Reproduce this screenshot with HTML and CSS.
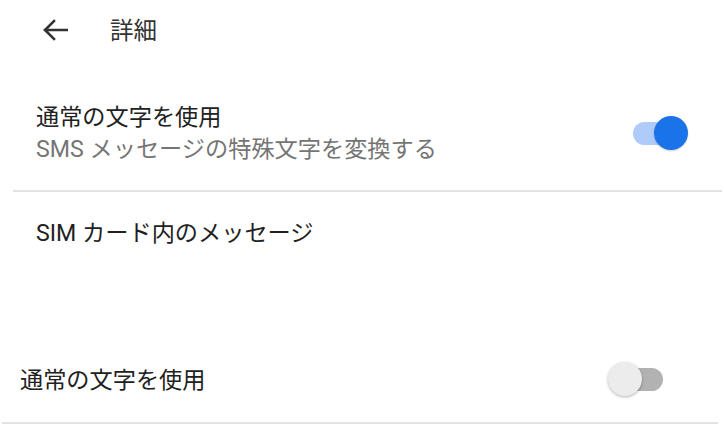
FILE: index.html
```html
<!DOCTYPE html>
<html lang="ja">

<head>
    <meta charset="UTF-8">
    <meta name="viewport" content="width=device-width, initial-scale=1.0">
    <title>詳細</title>
    <link rel="stylesheet" href="styles.css">
</head>

<body>
    <header class="app-bar">
        <svg class="back" width="26" height="22" viewBox="0 0 26 22">
            <path d="M25 11H3M12 2L3 11l9 9" fill="none" stroke="#333" stroke-width="2.6" stroke-linecap="square"/>
        </svg>
        <h1>詳細</h1>
    </header>

    <div class="setting first">
        <div class="text">
            <div class="title">通常の文字を使用</div>
            <div class="summary">SMS メッセージの特殊文字を変換する</div>
        </div>
        <div class="toggle on"><span class="track"></span><span class="thumb"></span></div>
    </div>

    <div class="setting plain">
        <div class="title">SIM カード内のメッセージ</div>
    </div>

    <div class="setting last">
        <div class="title">通常の文字を使用</div>
        <div class="toggle off"><span class="track"></span><span class="thumb"></span></div>
    </div>
</body>

</html>
```

FILE: styles.css
```css
body {
    margin: 0;
    background-color: white;
    font-family: Roboto, "Noto Sans CJK JP", sans-serif;
    color: #212121;
}

.app-bar {
    display: flex;
    align-items: center;
    height: 58px;
    padding-left: 42px;
}

.app-bar .back {
    margin-top: 2px;
}

.app-bar h1 {
    margin: 0 0 0 42px;
    font-size: 23.5px;
    font-weight: normal;
    color: #333;
}

.setting {
    display: flex;
    align-items: center;
    justify-content: space-between;
}

.title {
    font-size: 23.2px;
    line-height: 32px;
}

.summary {
    font-size: 23.2px;
    line-height: 32px;
    color: #757575;
}

.setting.first {
    margin: 0 2px 0 13px;
    padding: 43px 34px 25px 23px;
    border-bottom: 2px solid #e2e2e2;
}

.setting.plain {
    padding: 25px 0 0 36px;
}

.setting.last {
    margin: 87px 6px 0 2px;
    padding: 26px 55px 25px 18px;
    border-bottom: 2px solid #e2e2e2;
}

.toggle {
    position: relative;
    width: 55px;
    height: 35px;
}

.toggle .track {
    display: block;
    margin-top: 6px;
    height: 23px;
    border-radius: 12px;
}

.toggle .thumb {
    position: absolute;
    top: 0;
    width: 34px;
    height: 34px;
    border-radius: 50%;
}

.toggle.on .track {
    width: 46px;
    background-color: #aecbfa;
}

.toggle.on .thumb {
    right: 0;
    background-color: #1a73e8;
    box-shadow: 0 1px 2px rgba(0, 0, 0, 0.2);
}

.toggle.off .track {
    margin-left: 9px;
    width: 46px;
    background-color: #b2b2b2;
}

.toggle.off .thumb {
    left: 0;
    background-color: #ececec;
    box-shadow: 0 1px 3px rgba(0, 0, 0, 0.3);
}
```
